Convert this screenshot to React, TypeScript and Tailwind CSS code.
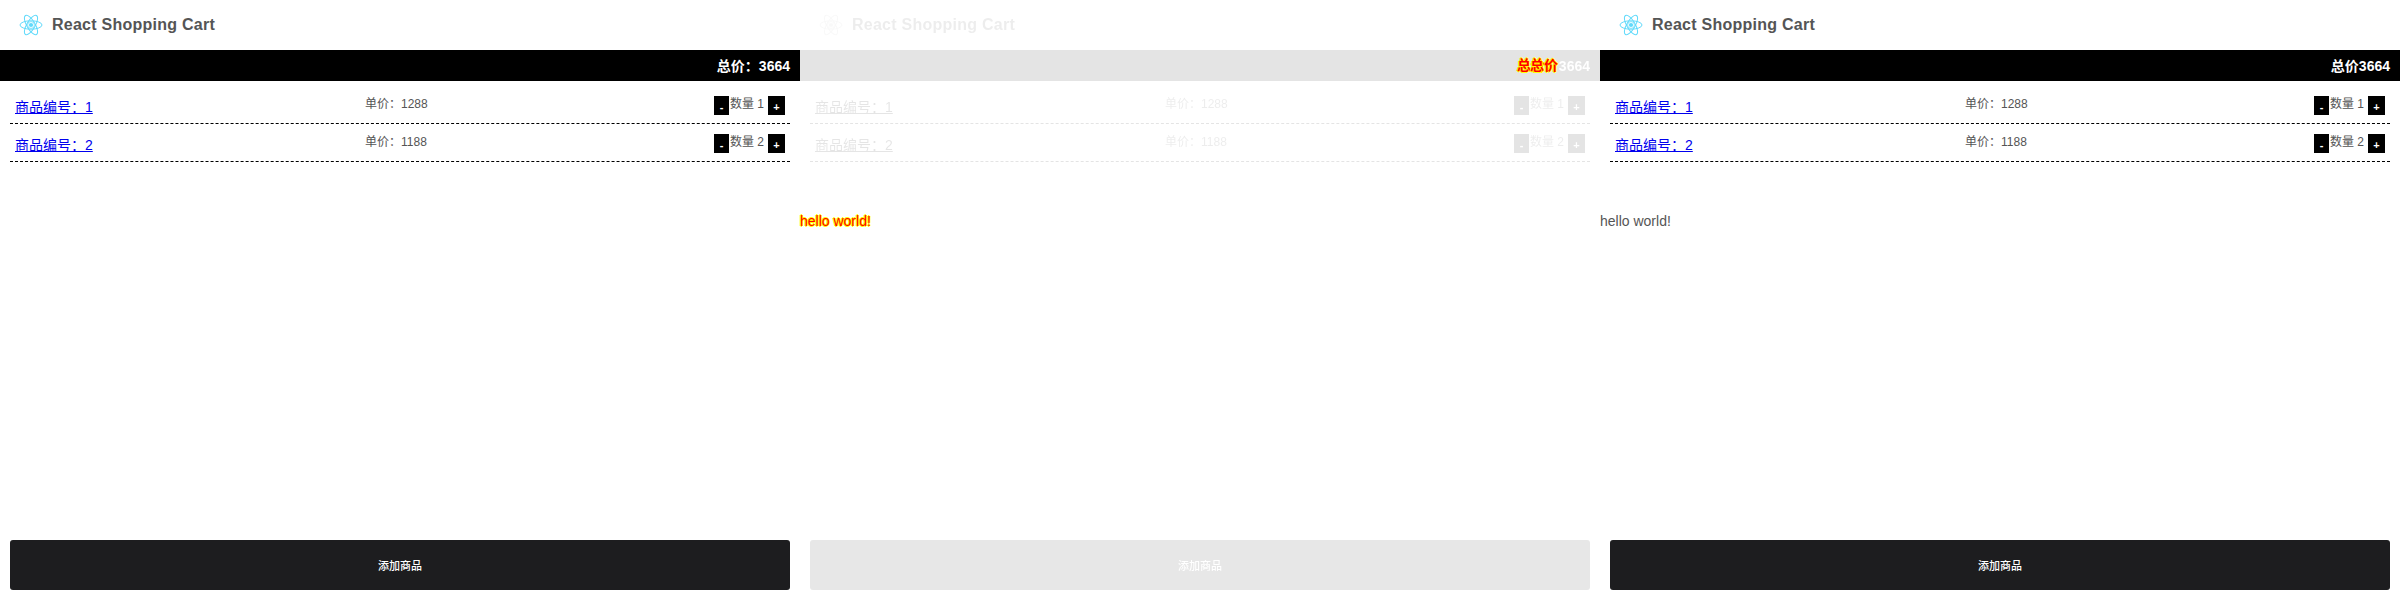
import React from "react";

const items = [
  { id: 1, price: 1288, count: 1 },
  { id: 2, price: 1188, count: 2 },
];

const font = "font-['Liberation_Sans','Noto_Sans_CJK_SC',sans-serif]";

function ReactLogo() {
  return (
    <svg viewBox="-12 -12 24 24" className="h-6 w-6" fill="none" stroke="#61dafb" strokeWidth="1">
      <circle r="2.1" fill="#61dafb" stroke="none" />
      <circle r="3.4" strokeWidth="0.7" />
      <ellipse rx="11" ry="4.2" />
      <ellipse rx="11" ry="4.2" transform="rotate(60)" />
      <ellipse rx="11" ry="4.2" transform="rotate(120)" />
    </svg>
  );
}

function Header() {
  return (
    <div className="flex h-[50px] items-center pl-[19px]">
      <ReactLogo />
      <span className="ml-[9px] text-base font-bold tracking-[0.25px] text-[#555555]">React Shopping Cart</span>
    </div>
  );
}

function Row({ id, price, count }: { id: number; price: number; count: number }) {
  return (
    <div className="flex h-[38px] items-start border-b border-dashed border-black pl-[5px] pr-[5px]">
      <a href="#" className="mt-[13px] w-[350px] text-sm leading-[16px] text-[#0000ee] underline">
        商品编号：{id}
      </a>
      <span className="mt-[11px] text-xs leading-[14px] text-[#555555]">单价：{price}</span>
      <div className="ml-auto mt-[10px] flex items-start text-xs leading-[14px] text-[#555555]">
        <button className="flex h-[19px] w-[15px] items-center justify-center bg-black pt-[2px] text-[11px] font-bold text-white">-</button>
        <span className="mx-[1px] mt-[1px]">数量 {count}</span>
        <button className="ml-[3px] flex h-[19px] w-[17px] items-center justify-center bg-black pt-[2px] text-[11px] font-bold text-white">+</button>
      </div>
    </div>
  );
}

function Cart({ label }: { label: string }) {
  return (
    <>
      <div className="flex h-[31px] items-center justify-end bg-black px-[10px] text-sm font-bold text-white">
        {label}3664
      </div>
      <div className="mt-[5px] px-[10px]">
        {items.map((item) => (
          <Row key={item.id} {...item} />
        ))}
      </div>
    </>
  );
}

function AddButton() {
  return (
    <button className="mx-[10px] mb-[10px] h-[50px] rounded-[3px] bg-[#1d1d1f] pt-[3px] text-[11px] font-medium text-white">
      添加商品
    </button>
  );
}

const hotText = "text-[#ff0000] [text-shadow:1px_0_0_#ffff00,-1px_0_0_#ffff00,0_1px_0_#ffff00,0_-1px_0_#ffff00]";

function Panel({ label, hello }: { label: string; hello?: boolean }) {
  return (
    <div className="flex h-[600px] w-[800px] flex-col">
      <Header />
      <Cart label={label} />
      {hello && <p className="mt-[49px] text-sm leading-[20px] text-[#555555]">hello world!</p>}
      <div className="flex-1" />
      <AddButton />
    </div>
  );
}

function FadingPanel() {
  return (
    <div className="relative flex h-[600px] w-[800px] flex-col">
      <div className="opacity-10 grayscale">
        <Header />
        <Cart label="" />
      </div>
      <span className={`absolute right-[41px] top-[55px] text-sm font-bold ${hotText}`}>总价：</span>
      <span className={`absolute right-[42px] top-[55px] text-sm font-bold ${hotText}`}>总价</span>
      <p className={`mt-[49px] text-sm leading-[20px] ${hotText}`}>hello world!</p>
      <div className="flex-1" />
      <div className="flex flex-col opacity-10 grayscale">
        <AddButton />
      </div>
    </div>
  );
}

export default function App() {
  return (
    <div className={`flex w-[2400px] bg-white ${font}`}>
      <Panel label="总价：" />
      <FadingPanel />
      <Panel label="总价" hello />
    </div>
  );
}
